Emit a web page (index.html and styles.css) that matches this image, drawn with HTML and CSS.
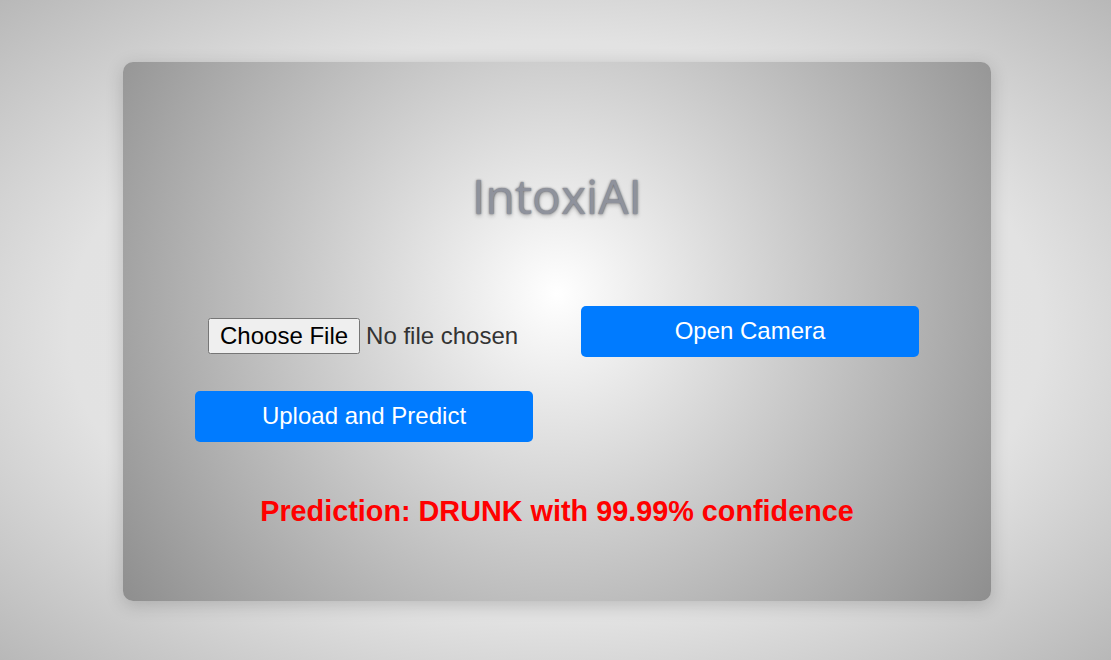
FILE: index.html
```html
<!DOCTYPE html>
<html lang="en">
<head>
<meta charset="utf-8">
<title>IntoxiAI</title>
<link rel="stylesheet" href="styles.css">
</head>
<body>
  <main class="card">
    <h1 class="title">IntoxiAI</h1>
    <div class="controls">
      <div class="cell cell-file">
        <input class="file-input" type="file" accept="image/*">
      </div>
      <div class="cell">
        <button class="btn" type="button">Open Camera</button>
      </div>
      <div class="cell">
        <button class="btn" type="button">Upload and Predict</button>
      </div>
    </div>
    <p class="result">Prediction: DRUNK with 99.99% confidence</p>
  </main>
</body>
</html>
```

FILE: styles.css
```css
html, body {
  margin: 0;
  height: 100%;
}

body {
  font-family: "Liberation Sans", Arial, sans-serif;
  background: radial-gradient(ellipse at center, #e6e6e6 0%, #e2e2e2 62%, #b8b8b8 100%);
  display: flex;
  align-items: center;
  justify-content: center;
  overflow: hidden;
}

.card {
  box-sizing: border-box;
  width: 868px;
  height: 539px;
  margin: 2px 0 0 3px;
  padding: 101px 48px 0;
  border-radius: 10px;
  background: radial-gradient(circle at 50% 43%, #ffffff 0%, #8e8e8e 100%);
  box-shadow: 0 4px 18px rgba(0, 0, 0, 0.18);
}

.title {
  margin: 0;
  text-align: center;
  font-family: "Open Sans", sans-serif;
  font-weight: 400;
  font-size: 48px;
  line-height: 65px;
  color: #8f929c;
  text-shadow: 0 0 2px rgba(40, 40, 50, 0.7), 0 2px 4px rgba(0, 0, 0, 0.25);
}

.controls {
  margin-top: 78px;
  display: grid;
  grid-template-columns: repeat(2, minmax(0, 1fr));
  row-gap: 34px;
  align-items: start;
}

.cell {
  display: flex;
  justify-content: center;
  min-width: 0;
}

.cell-file {
  padding-top: 12px;
}

.file-input {
  width: 312px;
  font-family: "Liberation Sans", Arial, sans-serif;
  font-size: 24px;
  color: #333;
}

.file-input::file-selector-button {
  font: inherit;
  color: #000;
  padding: 2px 10px;
  margin-right: 6px;
}

.btn {
  width: 338px;
  height: 51px;
  border: none;
  border-radius: 5px;
  background: #007bff;
  color: #fff;
  font-family: "Liberation Sans", Arial, sans-serif;
  font-size: 24px;
  cursor: pointer;
}

.result {
  margin: 53px 0 0;
  text-align: center;
  color: #ff0000;
  font-weight: 700;
  font-size: 28.8px;
}
```
